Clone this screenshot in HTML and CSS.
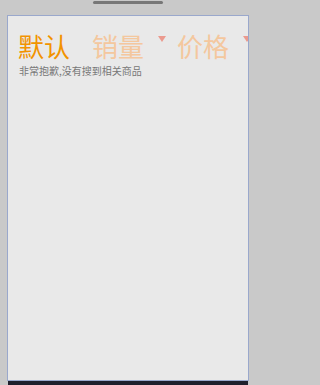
FILE: index.html
```html
<!DOCTYPE html>
<html>
<head>
<meta charset="utf-8">
<link rel="stylesheet" href="styles.css">
</head>
<body>
<div class="device">
  <div class="handle"></div>
  <div class="screen">
    <div class="tabs">
      <div class="tab tab-active"><span class="label">默认</span></div>
      <div class="tab"><span class="label">销量</span><span class="caret"></span></div>
      <div class="tab"><span class="label">价格</span><span class="caret"></span></div>
    </div>
    <p class="empty">非常抱歉,没有搜到相关商品</p>
  </div>
  <div class="bottom-bar"></div>
</div>
</body>
</html>
```

FILE: styles.css
```css
html, body {
  margin: 0;
  padding: 0;
  background: #c9c9c9;
}
.device {
  width: 255px;
  height: 385px;
  position: relative;
  overflow: hidden;
  font-family: "Noto Sans CJK SC", "Noto Sans", sans-serif;
}
.handle {
  margin: 1px 0 0 93px;
  width: 70px;
  height: 3px;
  border-radius: 2px;
  background: #777777;
}
.screen {
  margin: 11px 0 0 7px;
  width: 240px;
  height: 364px;
  border: 1px solid #9aa8cc;
  background: #e9e9e9;
  overflow: hidden;
  box-sizing: content-box;
  padding: 0;
}
.tabs {
  display: flex;
  flex-wrap: nowrap;
  padding: 17px 0 0 10px;
  white-space: nowrap;
}
.tab {
  display: flex;
  align-items: flex-start;
  flex: none;
  margin-right: 11px;
}
.tab-active {
  margin-right: 22px;
}
.label {
  font-size: 26px;
  line-height: 26px;
  color: #f4c79e;
}
.tab-active .label {
  color: #f29300;
}
.caret {
  width: 0;
  height: 0;
  margin: 3px 0 0 14px;
  border-left: 4px solid transparent;
  border-right: 4px solid transparent;
  border-top: 6px solid #eb9a8e;
}
.empty {
  margin: 7px 0 0 11px;
  font-size: 10px;
  line-height: 10px;
  color: #777777;
}
.bottom-bar {
  margin: 0 0 0 8px;
  width: 240px;
  height: 6px;
  background: #1f1f2c;
}
```
